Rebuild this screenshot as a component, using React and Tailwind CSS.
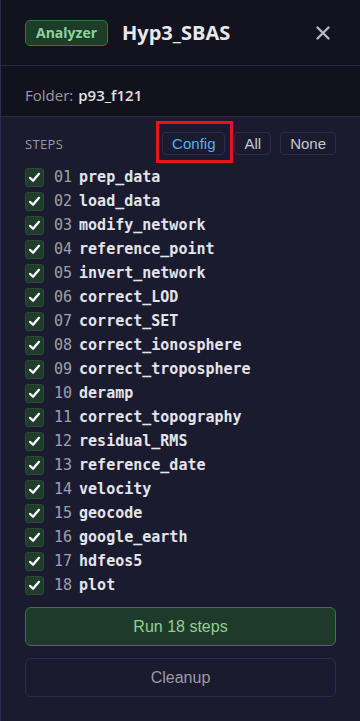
import React from "react";

const steps = [
  "prep_data",
  "load_data",
  "modify_network",
  "reference_point",
  "invert_network",
  "correct_LOD",
  "correct_SET",
  "correct_ionosphere",
  "correct_troposphere",
  "deramp",
  "correct_topography",
  "residual_RMS",
  "reference_date",
  "velocity",
  "geocode",
  "google_earth",
  "hdfeos5",
  "plot",
];

function Check() {
  return (
    <span className="flex h-[19px] w-[19px] shrink-0 items-center justify-center rounded-[3px] bg-[#1f3d2a] border border-[#2c4a35]">
      <svg width="13" height="13" viewBox="0 0 16 16" fill="none">
        <path d="M2.5 8.5 L6.2 12 L13.5 3.5" stroke="#ffffff" strokeWidth="2.8" strokeLinecap="round" strokeLinejoin="round" />
      </svg>
    </span>
  );
}

export default function App() {
  return (
    <main className="min-h-[721px] w-[360px] bg-[#1b1b30] border-l border-[#2c2c4c] text-white font-['Open_Sans',sans-serif]">
      <header className="flex h-[66px] items-center bg-[#13131f] border-b border-[#2a2a48] pl-[24px] pr-[30px]">
        <span className="rounded-[5px] border border-[#2f7a3e] bg-[#1e3d28] px-[10px] py-[2px] text-[14px] font-bold text-[#8fd19e] leading-[20px]">
          Analyzer
        </span>
        <h1 className="ml-[14px] text-[20px] font-bold text-[#e8e8ee]">Hyp3_SBAS</h1>
        <button className="ml-auto text-[#b8b8c0]">
          <svg width="14" height="14" viewBox="0 0 14 14">
            <path d="M1.5 1.5 L12.5 12.5 M12.5 1.5 L1.5 12.5" stroke="currentColor" strokeWidth="2.4" strokeLinecap="round" />
          </svg>
        </button>
      </header>

      <div className="flex h-[51px] items-center bg-[#12121c] border-b border-[#2a2a48] px-[24px] pt-[9px] text-[15px]">
        <span className="text-[#9a9aa4]">Folder:</span>
        <span className="ml-[5px] font-semibold text-[#e0e0e6]">p93_f121</span>
      </div>

      <section className="px-[24px] pt-[15px]">
        <div className="flex items-center h-[23px]">
          <span className="text-[13px] tracking-wide text-[#9a9aa4] pt-[2px]">STEPS</span>
          <div className="ml-auto flex items-center gap-[9px] font-['Liberation_Sans',sans-serif] text-[15px]">
            <div className="relative">
              <button className="h-[23px] rounded-[4px] border border-[#2c2c4c] px-[9px] text-[#4fb3e8]">Config</button>
              <span className="pointer-events-none absolute -left-[6px] -right-[8px] -top-[11px] -bottom-[8px] border-[3px] border-[#e8141c]" />
            </div>
            <button className="h-[23px] rounded-[4px] border border-[#2c2c4c] px-[9px] text-[#c8c8d0]">All</button>
            <button className="h-[23px] rounded-[4px] border border-[#2c2c4c] px-[9px] text-[#c8c8d0]">None</button>
          </div>
        </div>

        <ul className="mt-[10px] flex flex-col font-['DejaVu_Sans_Mono',monospace] text-[15px]">
          {steps.map((s, i) => (
            <li key={s} className="flex h-[24px] items-center">
              <Check />
              <span className="ml-[10px] text-[#a0a0a8]">{String(i + 1).padStart(2, "0")}</span>
              <span className="ml-[7px] font-semibold text-[#e4e4ea]">{s}</span>
            </li>
          ))}
        </ul>

        <button className="mt-[10px] h-[39px] w-full rounded-[6px] border border-[#2e7d3a] bg-[#1e3a2a] font-['Liberation_Sans',sans-serif] text-[16px] text-[#8fd18f]">
          Run 18 steps
        </button>
        <button className="mt-[12px] h-[39px] w-full rounded-[6px] border border-[#2c2c4c] font-['Liberation_Sans',sans-serif] text-[16px] text-[#9a9aa4]">
          Cleanup
        </button>
      </section>
    </main>
  );
}
